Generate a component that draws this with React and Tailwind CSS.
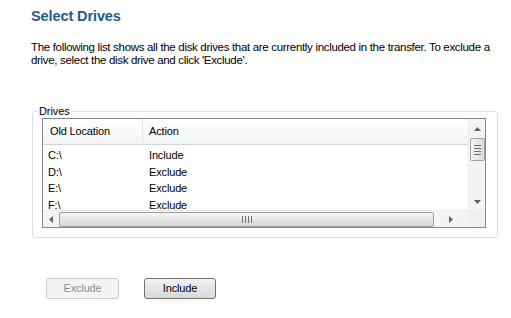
import React from 'react';

const rows = [
  { loc: 'C:\\', action: 'Include' },
  { loc: 'D:\\', action: 'Exclude' },
  { loc: 'E:\\', action: 'Exclude' },
  { loc: 'F:\\', action: 'Exclude' },
];

function Arrow({ dir }) {
  const pts = {
    up: '0,4 3.5,0 7,4',
    down: '0,0 3.5,4 7,0',
    left: '4,0 0,3.5 4,7',
    right: '0,0 4,3.5 0,7',
  }[dir];
  const vert = dir === 'up' || dir === 'down';
  return (
    <svg width={vert ? 7 : 4} height={vert ? 4 : 7} viewBox={vert ? '0 0 7 4' : '0 0 4 7'}>
      <polygon points={pts} fill="#606060" />
    </svg>
  );
}

export default function App() {
  return (
    <div className="w-[511px] h-[318px] bg-white font-['Liberation_Sans',Arial,sans-serif] text-black overflow-hidden">
      <div className="pl-[31px] pt-[6px]">
        <h1 className="text-[14.5px] leading-[20px] font-bold text-[#1e5a91] tracking-[-0.1px]">Select Drives</h1>
        <p className="mt-[15px] w-[466px] text-[11.5px] leading-[13px] tracking-[-0.32px]">
          The following list shows all the disk drives that are currently included in the transfer. To exclude a drive, select the disk drive and click 'Exclude'.
        </p>
      </div>

      <fieldset className="ml-[32px] mt-[38px] w-[466px] h-[133px] border border-[#d5dfe5] rounded-[3px] pl-[9px] pt-[1px]">
        <legend className="ml-[-5px] px-[2px] text-[11px] leading-[12px] tracking-[-0.1px]">Drives</legend>
        <div className="w-[444px] h-[110px] border border-[#828790] grid grid-cols-[1fr_17px] grid-rows-[1fr_17px] text-[11px] tracking-[-0.15px]">
          <div className="overflow-hidden">
            <div className="flex h-[26px] bg-gradient-to-b from-white to-[#f3f4f6] border-b border-[#d5d5d5]">
              <div className="w-[100px] border-r border-[#e3e5e8] pl-[7px] flex items-center">Old Location</div>
              <div className="pl-[6px] flex items-center">Action</div>
            </div>
            <div className="pt-[2px]">
              {rows.map((r) => (
                <div key={r.loc} className="flex h-[16.6px] items-center">
                  <div className="w-[101px] pl-[5px]">{r.loc}</div>
                  <div className="pl-[5px]">{r.action}</div>
                </div>
              ))}
            </div>
          </div>
          <div className="bg-[#f4f4f4] flex flex-col items-center border-l border-[#ececec]">
            <div className="h-[19px] flex items-center justify-center"><Arrow dir="up" /></div>
            <div className="w-[15px] h-[23px] border border-[#a0a0a0] rounded-[2px] bg-gradient-to-r from-[#f5f5f5] to-[#dadada] flex flex-col items-center justify-center gap-[2px]">
              <div className="w-[7px] h-px bg-[#707070]" />
              <div className="w-[7px] h-px bg-[#707070]" />
              <div className="w-[7px] h-px bg-[#707070]" />
              <div className="w-[7px] h-px bg-[#707070]" />
            </div>
            <div className="flex-1" />
            <div className="h-[17px] flex items-center justify-center"><Arrow dir="down" /></div>
          </div>
          <div className="bg-[#f4f4f4] flex items-center border-t border-[#ececec]">
            <div className="w-[16px] flex justify-center"><Arrow dir="left" /></div>
            <div className="w-[375px] h-[15px] border border-[#a0a0a0] rounded-[2px] bg-gradient-to-b from-[#f5f5f5] to-[#d8d8d8] flex items-center justify-center gap-[2px]">
              <div className="w-px h-[7px] bg-[#707070]" />
              <div className="w-px h-[7px] bg-[#707070]" />
              <div className="w-px h-[7px] bg-[#707070]" />
              <div className="w-px h-[7px] bg-[#707070]" />
            </div>
            <div className="flex-1 flex justify-center"><Arrow dir="right" /></div>
          </div>
          <div className="bg-[#f0f0f0]" />
        </div>
      </fieldset>

      <div className="flex gap-[25px] ml-[46px] mt-[40px]">
        <button className="w-[73px] h-[21px] border border-[#c9c9c9] rounded-[3px] bg-[#f4f4f4] text-[11px] tracking-[-0.15px] text-[#8d8d8d]">Exclude</button>
        <button className="w-[72px] h-[21px] border border-[#707070] rounded-[3px] bg-gradient-to-b from-[#f2f2f2] to-[#d9d9d9] text-[11px] tracking-[-0.15px]">Include</button>
      </div>
    </div>
  );
}
